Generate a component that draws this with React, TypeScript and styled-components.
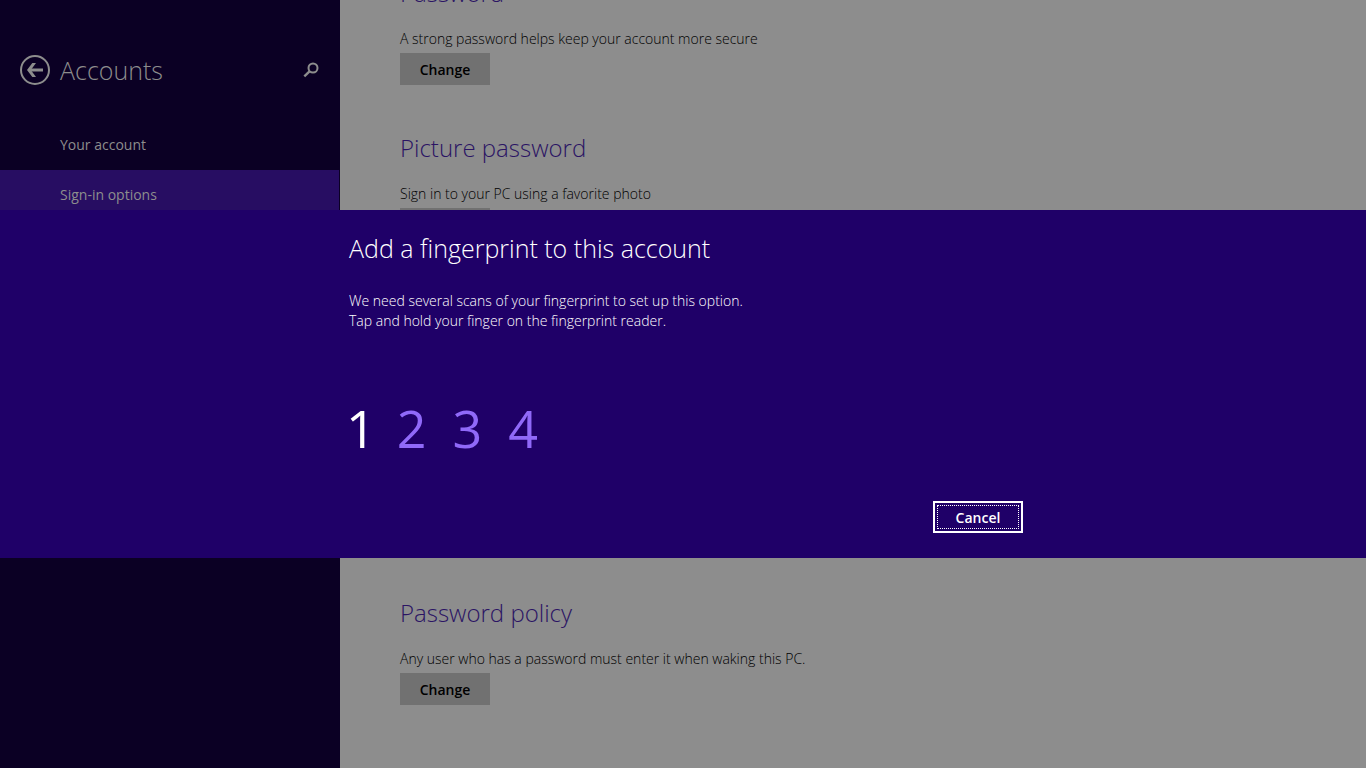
import React from "react";
import styled, { createGlobalStyle } from "styled-components";

const GlobalStyle = createGlobalStyle`
  * { box-sizing: border-box; }
  body { margin: 0; overflow: hidden; background: #8d8d8d; }
  body, button { font-family: "Open Sans", "Noto Sans", sans-serif; }
  h1, h2, p, ol, ul { margin: 0; padding: 0; font-weight: 300; list-style: none; }
`;

const Page = styled.div`
  display: flex;
  height: 100vh;
  overflow: hidden;
`;

const Sidebar = styled.nav`
  width: 340px;
  flex: none;
  padding-top: 50px;
  background: #0b0024;
  color: #8d8d8d;
`;

const SidebarHeader = styled.header`
  display: flex;
  align-items: center;
  height: 40px;
  margin-bottom: 30px;
  padding: 0 20px;
`;

const IconButton = styled.button`
  display: flex;
  padding: 0;
  border: 0;
  background: none;
  color: #8d8d8d;
`;

const SidebarTitle = styled.h1`
  flex: 1;
  padding-left: 10px;
  font-size: 25px;
  line-height: 40px;
`;

const NavLink = styled.a<{ $selected?: boolean }>`
  display: block;
  margin-right: 1px;
  padding-left: 60px;
  font-size: 14px;
  line-height: 50px;
  color: #8d8d8d;
  text-decoration: none;
  background: ${(p) => (p.$selected ? "#270d62" : "transparent")};
`;

const Content = styled.main`
  flex: 1;
  display: flex;
  flex-direction: column;
  margin-top: -27px;
  padding: 0 60px;
`;

const Section = styled.section<{ $rows?: number }>`
  flex: none;
  height: ${(p) => (p.$rows ?? 1) * 155}px;
`;

const SectionTitle = styled.h2`
  margin-bottom: 16px;
  font-size: 24px;
  line-height: 40px;
  color: #2b1464;
`;

const SectionText = styled.p`
  margin-bottom: 4px;
  font-size: 14px;
  line-height: 20px;
  color: #000;
`;

const ActionButton = styled.button`
  width: 90px;
  height: 32px;
  padding: 0;
  border: 0;
  background: #717171;
  color: #000;
  font-size: 14px;
  font-weight: 600;
`;

const Overlay = styled.div`
  position: fixed;
  inset: 0;
  display: flex;
  align-items: center;
`;

const Dialog = styled.div`
  width: 100%;
  padding: 18px 0 25px;
  background: #1f0068;
  color: #fff;
`;

const DialogBody = styled.div`
  width: 680px;
  margin: 0 auto;
  padding-left: 6px;
`;

const DialogTitle = styled.h2`
  margin-bottom: 23px;
  font-size: 25px;
  line-height: 40px;
`;

const DialogText = styled.p`
  font-size: 14px;
  line-height: 20px;
`;

const Steps = styled.ol`
  display: flex;
  gap: 26px;
  margin: 60px 0 36px -3px;
  font-size: 52px;
  line-height: 74px;
`;

const Step = styled.li<{ $current?: boolean }>`
  margin-right: ${(p) => (p.$current ? "-5px" : "0")};
  font-weight: 400;
  color: ${(p) => (p.$current ? "#fff" : "#9069f9")};
`;

const DialogActions = styled.div`
  display: flex;
  justify-content: flex-end;
`;

const CancelButton = styled.button`
  width: 90px;
  height: 32px;
  padding: 2px;
  border: 2px solid #fff;
  background: none;
  color: #fff;
  font-size: 14px;
  font-weight: 600;
  outline: 1px dotted #fff;
  outline-offset: -5px;
`;

const BackIcon = () => (
  <svg width="30" height="30" viewBox="0 0 30 30" fill="none" stroke="currentColor">
    <circle cx="15" cy="15" r="14" strokeWidth="2" />
    <path d="M23 15H9" strokeWidth="3" />
    <path d="M16 8H12.3L7 15L12.3 22H16L10.8 15Z" fill="currentColor" stroke="none" />
  </svg>
);

const SearchIcon = () => (
  <svg width="18" height="18" viewBox="0 0 18 18" fill="none" stroke="currentColor">
    <circle cx="11" cy="7" r="4.5" strokeWidth="2" />
    <path d="M7.8 10.2L2.3 15.4" strokeWidth="2.4" />
  </svg>
);

export default function App() {
  return (
    <>
      <GlobalStyle />
      <Page>
        <Sidebar>
          <SidebarHeader>
            <IconButton aria-label="Back"><BackIcon /></IconButton>
            <SidebarTitle>Accounts</SidebarTitle>
            <IconButton aria-label="Search"><SearchIcon /></IconButton>
          </SidebarHeader>
          <NavLink href="#account">Your account</NavLink>
          <NavLink href="#sign-in" $selected>Sign-in options</NavLink>
        </Sidebar>
        <Content>
          <Section>
            <SectionTitle>Password</SectionTitle>
            <SectionText>A strong password helps keep your account more secure</SectionText>
            <ActionButton>Change</ActionButton>
          </Section>
          <Section $rows={3}>
            <SectionTitle>Picture password</SectionTitle>
            <SectionText>Sign in to your PC using a favorite photo</SectionText>
            <ActionButton aria-label="Picture password" />
          </Section>
          <Section>
            <SectionTitle>Password policy</SectionTitle>
            <SectionText>Any user who has a password must enter it when waking this PC.</SectionText>
            <ActionButton>Change</ActionButton>
          </Section>
        </Content>
      </Page>
      <Overlay>
        <Dialog role="dialog" aria-labelledby="dialog-title">
          <DialogBody>
            <DialogTitle id="dialog-title">Add a fingerprint to this account</DialogTitle>
            <DialogText>We need several scans of your fingerprint to set up this option.</DialogText>
            <DialogText>Tap and hold your finger on the fingerprint reader.</DialogText>
            <Steps>
              <Step $current>1</Step>
              <Step>2</Step>
              <Step>3</Step>
              <Step>4</Step>
            </Steps>
            <DialogActions>
              <CancelButton>Cancel</CancelButton>
            </DialogActions>
          </DialogBody>
        </Dialog>
      </Overlay>
    </>
  );
}
